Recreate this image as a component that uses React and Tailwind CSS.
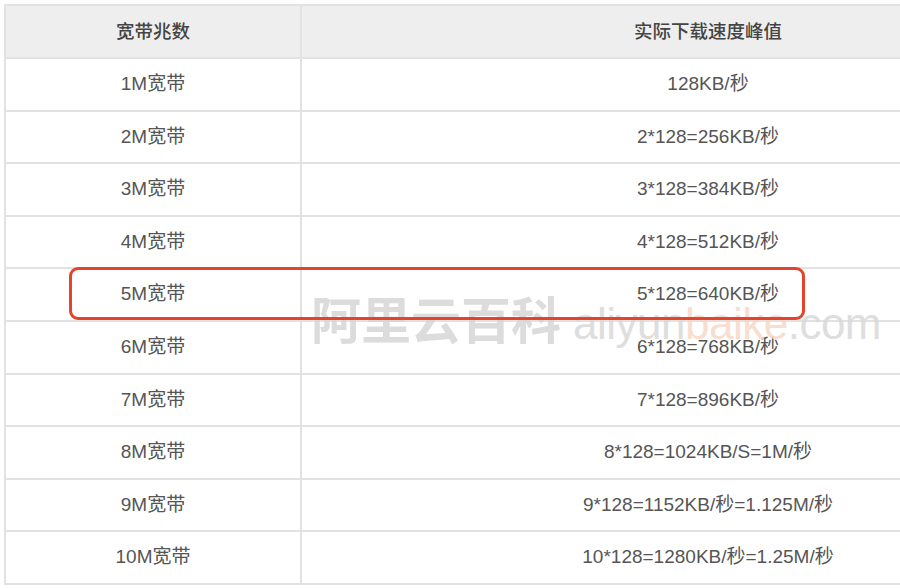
import React from "react";

const rows = [
  ["1M宽带", "128KB/秒"],
  ["2M宽带", "2*128=256KB/秒"],
  ["3M宽带", "3*128=384KB/秒"],
  ["4M宽带", "4*128=512KB/秒"],
  ["5M宽带", "5*128=640KB/秒"],
  ["6M宽带", "6*128=768KB/秒"],
  ["7M宽带", "7*128=896KB/秒"],
  ["8M宽带", "8*128=1024KB/S=1M/秒"],
  ["9M宽带", "9*128=1152KB/秒=1.125M/秒"],
  ["10M宽带", "10*128=1280KB/秒=1.25M/秒"],
];

export default function App() {
  return (
    <div
      className="relative w-[900px] h-[588px] overflow-hidden bg-white"
      style={{ fontFamily: '"Liberation Sans", "Noto Sans CJK SC", sans-serif' }}
    >
      <div className="pt-[4px] pl-[4px]">
        <table className="border-collapse w-[1112px] text-[19px] text-[#555]">
          <thead>
            <tr className="bg-[#eeeeee] h-[53px]">
              <th className="w-[296px] border-2 border-[#e2e2e2] font-medium text-[#444] text-[18.5px] text-center">宽带兆数</th>
              <th className="border-2 border-[#e2e2e2] font-medium text-[#444] text-[18.5px] text-center">实际下载速度峰值</th>
            </tr>
          </thead>
          <tbody>
            {rows.map(([a, b]) => (
              <tr key={a} className="h-[52.6px]">
                <td className="border-2 border-[#e2e2e2] text-center font-normal">{a}</td>
                <td className="border-2 border-[#e2e2e2] text-center font-normal">{b}</td>
              </tr>
            ))}
          </tbody>
        </table>
      </div>

      <div className="absolute left-[311px] top-[280px] flex items-baseline whitespace-nowrap pointer-events-none opacity-85">
        <span
          className="text-[50px] font-bold text-[#d6d6d6] tracking-[0px]"
          style={{ fontFamily: '"Noto Sans CJK SC", sans-serif' }}
        >
          阿里云百科
        </span>
        <span className="ml-[12px] text-[44px] text-[#d9d9d9] tracking-[-0.5px]" style={{ fontFamily: '"Liberation Sans", sans-serif' }}>
          aliyun<span className="text-[#f6d9c8]">baike</span>.com
        </span>
      </div>

      <div className="absolute left-[69px] top-[267px] w-[736px] h-[53px] border-[3px] border-[#e5432b] rounded-[9px] pointer-events-none" />
    </div>
  );
}
